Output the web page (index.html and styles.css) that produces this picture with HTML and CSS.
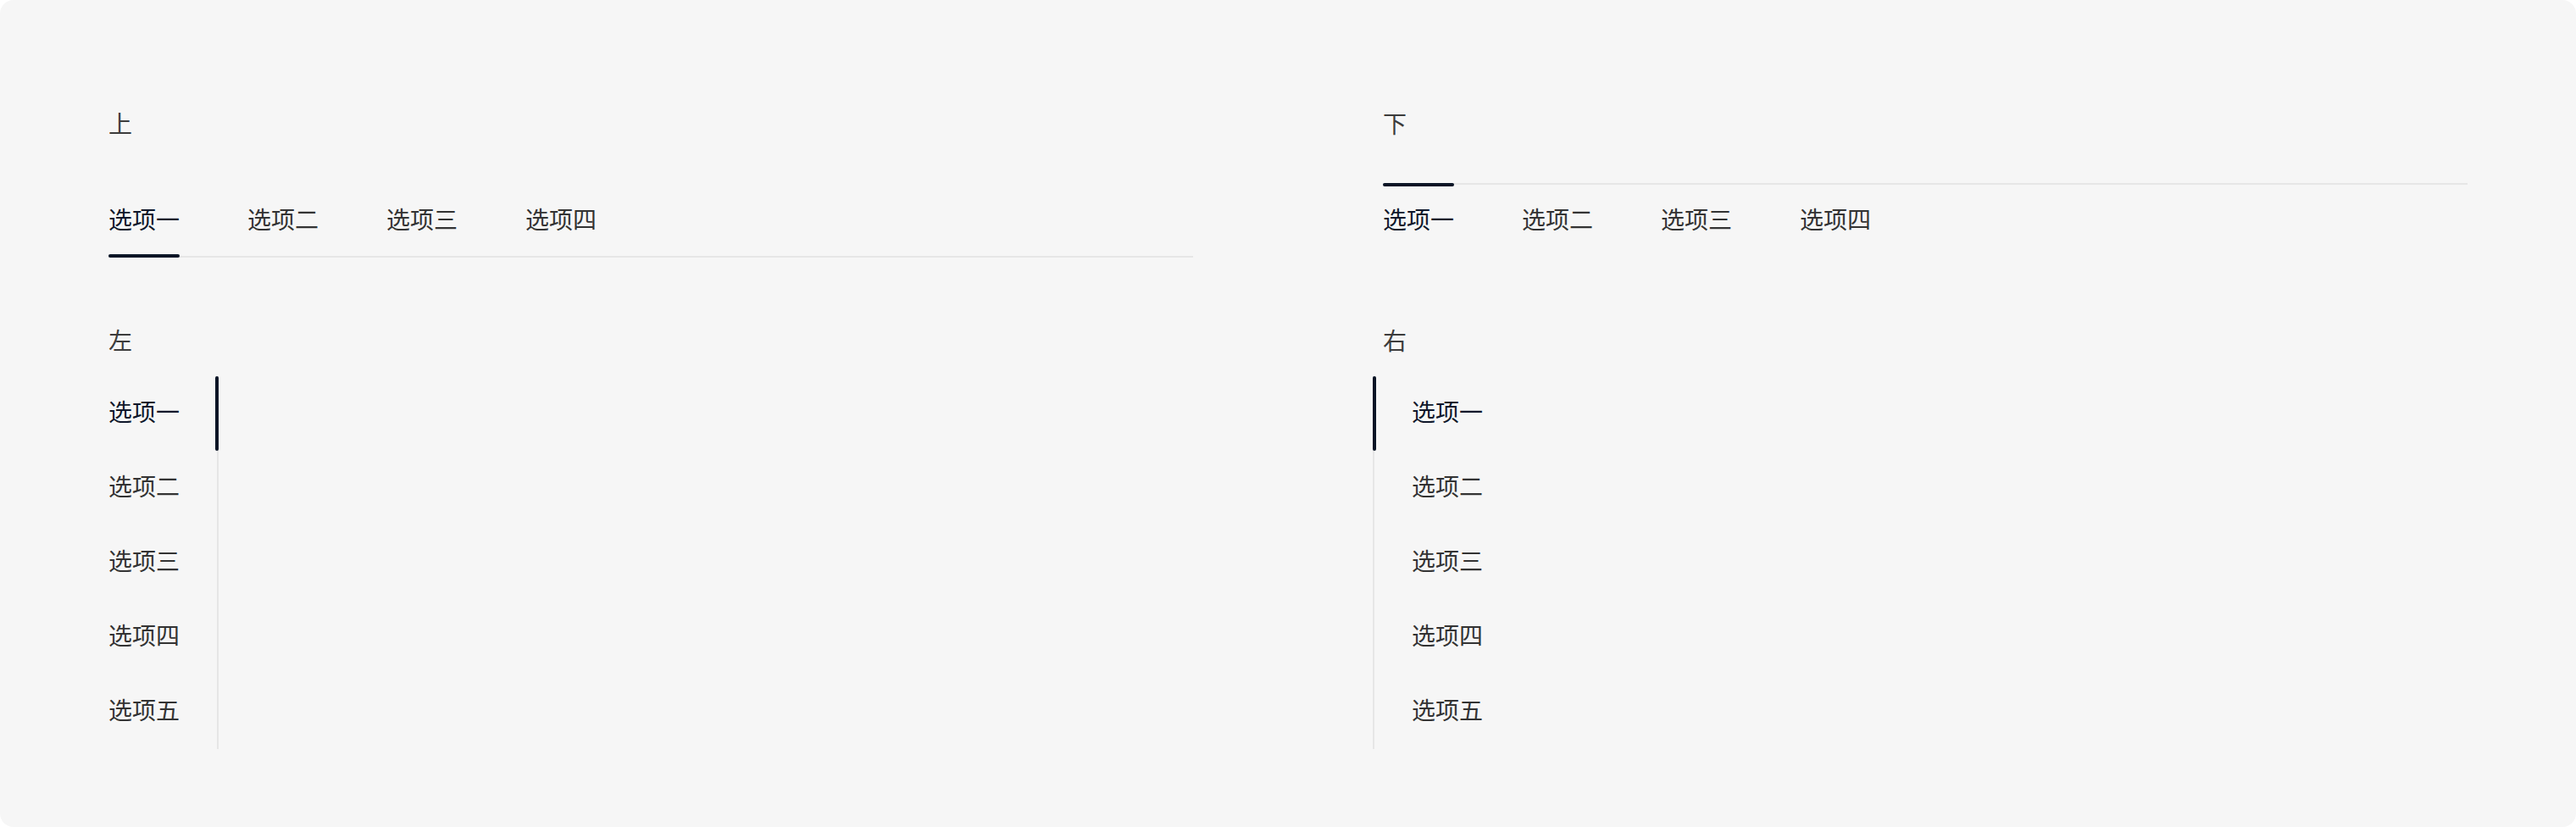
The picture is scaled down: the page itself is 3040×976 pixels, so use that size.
FILE: index.html
```html
<!DOCTYPE html>
<html lang="zh-CN">
<head>
<meta charset="utf-8">
<title>Tabs</title>
<link rel="stylesheet" href="styles.css">
</head>
<body>
<div class="page">
  <section class="demo">
    <div class="label">上</div>
    <div class="htabs htabs-top">
      <div class="tab active">选项一</div>
      <div class="tab">选项二</div>
      <div class="tab">选项三</div>
      <div class="tab">选项四</div>
    </div>
  </section>
  <section class="demo">
    <div class="label">下</div>
    <div class="htabs htabs-bottom">
      <div class="tab active">选项一</div>
      <div class="tab">选项二</div>
      <div class="tab">选项三</div>
      <div class="tab">选项四</div>
    </div>
  </section>
  <section class="demo demo-v">
    <div class="label">左</div>
    <div class="vtabs vtabs-left">
      <div class="vtab active">选项一</div>
      <div class="vtab">选项二</div>
      <div class="vtab">选项三</div>
      <div class="vtab">选项四</div>
      <div class="vtab">选项五</div>
    </div>
  </section>
  <section class="demo demo-v">
    <div class="label">右</div>
    <div class="vtabs vtabs-right">
      <div class="vtab active">选项一</div>
      <div class="vtab">选项二</div>
      <div class="vtab">选项三</div>
      <div class="vtab">选项四</div>
      <div class="vtab">选项五</div>
    </div>
  </section>
</div>
</body>
</html>
```
FILE: styles.css
```css
html, body {
  margin: 0;
  padding: 0;
  background: #ffffff;
}

.page {
  box-sizing: border-box;
  width: 3040px;
  height: 976px;
  padding: 125px 128px 0 128px;
  background: #f6f6f6;
  border-radius: 16px;
  display: grid;
  grid-template-columns: 1280px 1280px;
  column-gap: 224px;
  row-gap: 77px;
  align-content: start;
  font-family: "Noto Sans CJK SC", "Noto Sans", sans-serif;
  font-size: 28px;
  line-height: 40px;
  color: #333333;
}

.demo {
  display: flex;
  flex-direction: column;
  align-items: flex-start;
}

.label {
  height: 40px;
  color: #3c3c3c;
  margin-bottom: 51px;
}

.demo-v .label {
  margin-bottom: 23px;
}

/* horizontal tabs */
.htabs {
  display: flex;
  gap: 80px;
  align-self: stretch;
}

.htabs-top {
  border-bottom: 2px solid #e6e6e6;
}

.htabs-bottom {
  border-top: 2px solid #e6e6e6;
}

.tab {
  position: relative;
  box-sizing: border-box;
  height: 86px;
  padding-bottom: 2px;
  display: flex;
  align-items: center;
  color: #333333;
}

.htabs-bottom .tab {
  padding-bottom: 6px;
}

.tab.active {
  color: #0f172a;
}

.tab.active::after {
  content: "";
  position: absolute;
  left: 0;
  right: 0;
  height: 4px;
  border-radius: 2px;
  background: #0b1526;
}

.htabs-top .tab.active::after {
  bottom: -2px;
}

.htabs-bottom .tab.active::after {
  top: -2px;
}

/* vertical tabs */
.vtabs {
  display: flex;
  flex-direction: column;
}

.vtabs-left {
  border-right: 2px solid #e6e6e6;
}

.vtabs-right {
  border-left: 2px solid #e6e6e6;
  margin-left: -12px;
}

.vtab {
  position: relative;
  box-sizing: border-box;
  height: 88px;
  padding-bottom: 6px;
  display: flex;
  align-items: center;
  color: #333333;
}

.vtabs-left .vtab {
  padding-right: 44px;
}

.vtabs-right .vtab {
  padding-left: 44px;
}

.vtab.active {
  color: #0f172a;
}

.vtab.active::after {
  content: "";
  position: absolute;
  top: 0;
  bottom: 0;
  width: 4px;
  border-radius: 2px;
  background: #0b1526;
}

.vtabs-left .vtab.active::after {
  right: -2px;
}

.vtabs-right .vtab.active::after {
  left: -2px;
}
```
